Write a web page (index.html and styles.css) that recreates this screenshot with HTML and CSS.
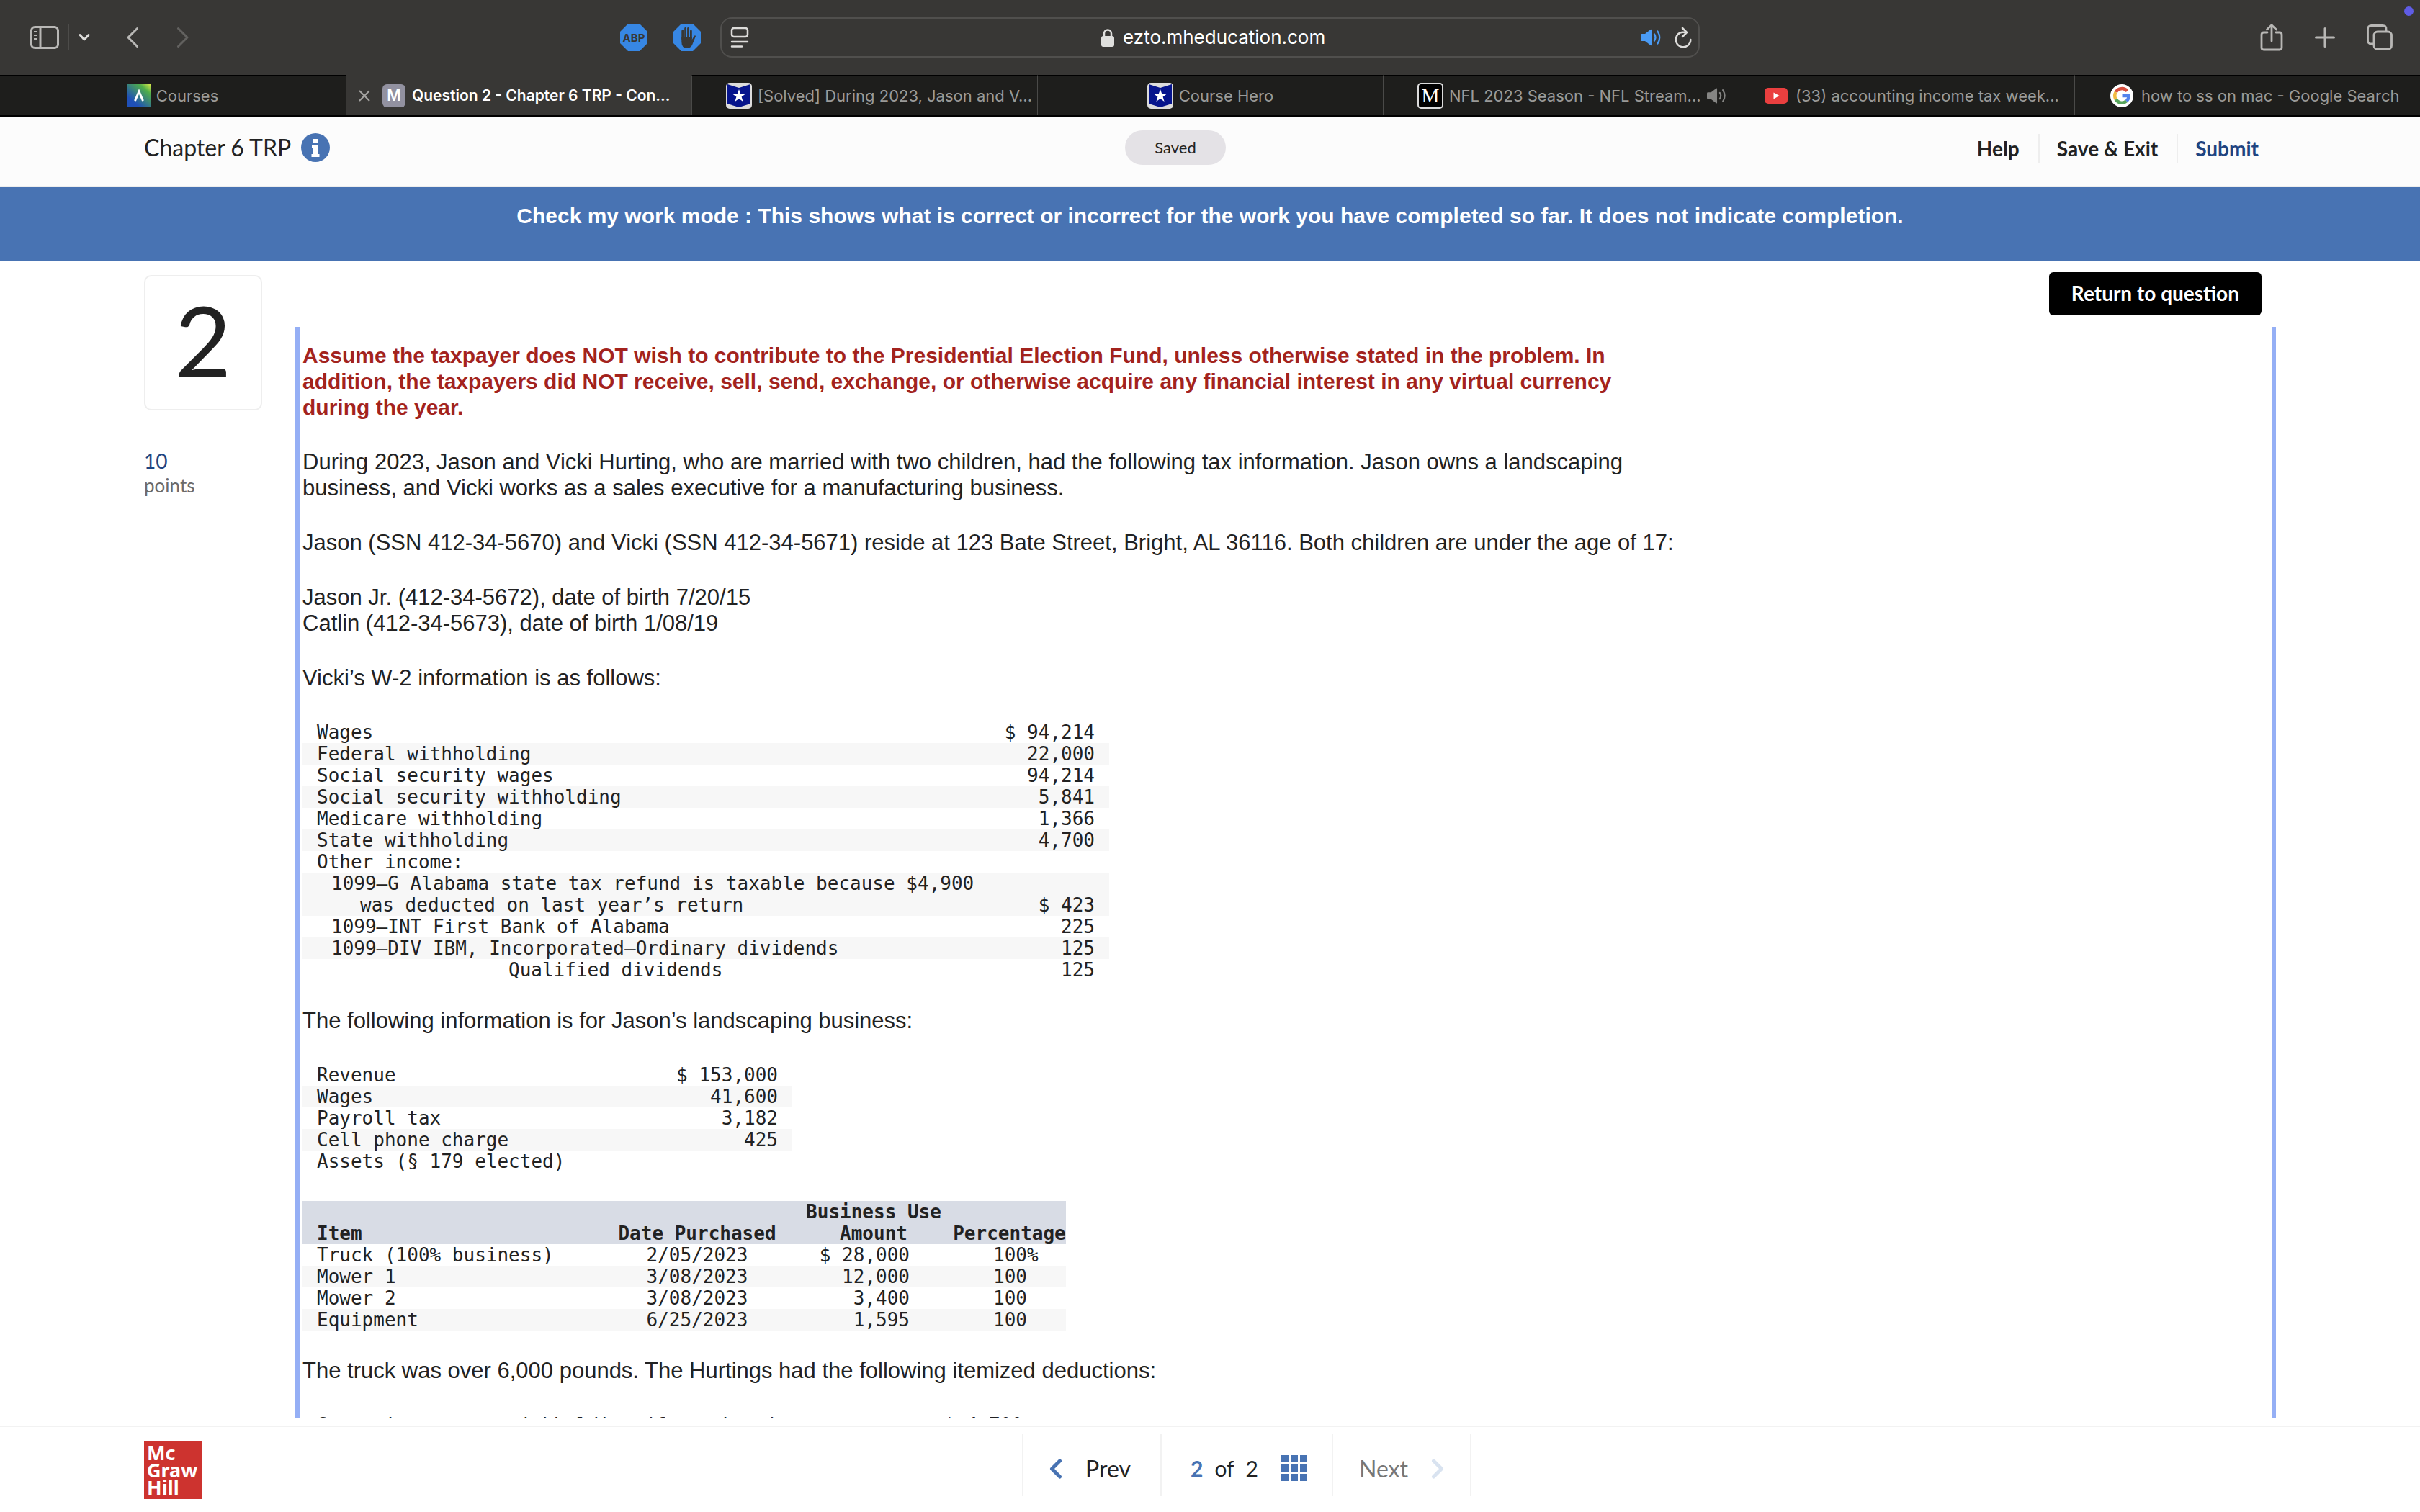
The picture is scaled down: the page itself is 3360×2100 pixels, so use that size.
FILE: index.html
```html
<!DOCTYPE html>
<html lang="en">
<head>
<meta charset="utf-8">
<title>Question 2 - Chapter 6 TRP - Connect</title>
<link rel="stylesheet" href="styles.css">
</head>
<body>
<div class="toolbar">
  <div class="tools-left">
    <button class="tool" aria-label="Sidebar"><svg width="40" height="32" viewBox="0 0 40 32" fill="none" stroke="#b8b7b5" stroke-width="3"><rect x="1.500" y="1.500" width="37" height="29" rx="5"/><path d="M14 2v28"/><path d="M5 8h5M5 13h5M5 18h5" stroke-width="2"/></svg></button>
    <span class="tool-line"></span>
    <button class="tool" aria-label="Tab groups"><svg width="16" height="12" viewBox="0 0 16 12" fill="none" stroke="#dddcda" stroke-width="3" stroke-linecap="round" stroke-linejoin="round"><path d="M2 2.500l6 6.500 6-6.500"/></svg></button>
    <button class="tool back" aria-label="Back"><svg width="18" height="30" viewBox="0 0 18 30" fill="none" stroke="#b8b7b5" stroke-width="3" stroke-linecap="round" stroke-linejoin="round"><path d="M15.500 2.500L3 15l12.500 12.500"/></svg></button>
    <button class="tool forward" aria-label="Forward"><svg width="18" height="30" viewBox="0 0 18 30" fill="none" stroke="#62615f" stroke-width="3" stroke-linecap="round" stroke-linejoin="round"><path d="M2.500 2.500L15 15 2.500 27.500"/></svg></button>
    <div class="extensions">
      <button class="tool" aria-label="Adblock Plus"><svg width="40" height="40" viewBox="0 0 40 40"><path d="M12 1h16l11 11v16L28 39H12L1 28V12z" fill="#3787e4"/><text x="20" y="26" text-anchor="middle" class="abp">ABP</text></svg></button>
      <button class="tool" aria-label="AdBlock"><svg width="40" height="40" viewBox="0 0 40 40"><path d="M12 1h16l11 11v16L28 39H12L1 28V12z" fill="#3787e4"/><g stroke="#383735" stroke-width="2.800" stroke-linecap="round" fill="none"><path d="M13.700 22V11M17.600 20V7.500M21.500 20V7.500M25.400 21V11"/></g><path d="M12.300 19h14.500v4l3.200-5.300q1.500-1.200 2 .6L28 28q-2 7-8 7-7.700 0-7.700-9z" fill="#383735"/></svg></button>
    </div>
  </div>
  <div class="address">
    <button class="tool" aria-label="Reader"><svg width="26" height="30" viewBox="0 0 26 30" fill="none" stroke="#dddcda" stroke-width="2.500" stroke-linecap="round"><rect x="2" y="2" width="22" height="12" rx="3"/><path d="M2 21h22M2 27.500h14"/></svg></button>
    <div class="host">
      <svg width="18" height="26" viewBox="0 0 18 26"><rect y="11" width="18" height="15" rx="3" fill="#dfdfdd"/><path d="M4 12V7.500a5 5 0 0 1 10 0V12" fill="none" stroke="#dfdfdd" stroke-width="2.500"/></svg>
      <input class="url" type="text" aria-label="Address" value="ezto.mheducation.com">
    </div>
    <div class="address-end">
      <button class="tool" aria-label="Mute"><svg width="32" height="24" viewBox="0 0 32 24"><path d="M0 8.500Q0 7 1.500 7H6l7-5.500Q15 0 15 2v20q0 2-2 .5L6 17H1.500Q0 17 0 15.500z" fill="#4a9bf5"/><path d="M19 7.500q3 4.500 0 9M23.500 3.500q5.500 8.500 0 17" fill="none" stroke="#4a9bf5" stroke-width="2.300" stroke-linecap="round"/></svg></button>
      <button class="tool" aria-label="Reload"><svg width="26" height="30" viewBox="0 0 26 30" fill="none" stroke="#dddcda" stroke-width="2.500" stroke-linecap="round" stroke-linejoin="round"><path d="M17 8.500A10.300 10.300 0 1 0 23.300 18M12 2l6 6-6 6"/></svg></button>
    </div>
  </div>
  <div class="tools-right">
    <button class="tool" aria-label="Share"><svg width="32" height="38" viewBox="0 0 32 38" fill="none" stroke="#b8b7b5" stroke-width="2.800" stroke-linecap="round" stroke-linejoin="round"><path d="M10 12H5q-3 0-3 3v18q0 3 3 3h22q3 0 3-3V15q0-3-3-3h-5M16 24V2M9.500 8L16 1.700 22.500 8"/></svg></button>
    <button class="tool" aria-label="New tab"><svg width="28" height="28" viewBox="0 0 28 28" stroke="#b8b7b5" stroke-width="3" stroke-linecap="round"><path d="M14 1.500v25M1.500 14h25"/></svg></button>
    <button class="tool" aria-label="Tab overview"><svg width="36" height="36" viewBox="0 0 36 36" fill="none" stroke="#b8b7b5" stroke-width="2.800"><rect x="10" y="10" width="24.500" height="24.500" rx="5"/><path d="M9 27H6.500q-5 0-5-5V6.500q0-5 5-5H22q5 0 5 5V9"/></svg></button>
  </div>
  <span class="status-dot"></span>
</div>
<nav class="tabs">
  <a class="tab centred" href="#"><svg width="32" height="32" viewBox="0 0 32 32"><defs><linearGradient id="cg" x1="1" y1="0" x2="0.300" y2="0.800"><stop offset="0" stop-color="#d8e84a"/><stop offset="0.300" stop-color="#4fae4a"/><stop offset="1" stop-color="#1f50b8"/></linearGradient></defs><path d="M0 0h32v32H0z" fill="url(#cg)"/><path d="M10.500 23L16 10l5.500 13" fill="none" stroke="#fff" stroke-width="3"/></svg><span>Courses</span></a>
  <a class="tab active" href="#"><svg class="close" width="16" height="16" viewBox="0 0 16 16" stroke="#a5a4a2" stroke-width="2"><path d="M1 1l14 14M15 1L1 15"/></svg><span class="m-icon">M</span><span>Question 2 - Chapter 6 TRP - Con...</span></a>
  <a class="tab" href="#"><svg width="36" height="36" viewBox="0 0 36 36"><rect width="36" height="36" rx="5" fill="#dcdcdc"/><path d="M2 2l16 5 16-5v27l-16 5-16-5z" fill="#06148c"/><path d="M18 9l2.300 6.500H27l-5.400 4 2 6.500-5.600-4-5.600 4 2-6.500-5.400-4h6.700z" fill="#fff"/></svg><span>[Solved] During 2023, Jason and V...</span></a>
  <a class="tab centred" href="#"><svg width="36" height="36" viewBox="0 0 36 36"><rect width="36" height="36" rx="5" fill="#dcdcdc"/><path d="M2 2l16 5 16-5v27l-16 5-16-5z" fill="#06148c"/><path d="M18 9l2.300 6.500H27l-5.400 4 2 6.500-5.600-4-5.600 4 2-6.500-5.400-4h6.700z" fill="#fff"/></svg><span>Course Hero</span></a>
  <a class="tab" href="#"><span class="nfl-icon">M</span><span>NFL 2023 Season - NFL Stream...</span><svg width="30" height="24" viewBox="0 0 32 24"><path d="M0 8.500Q0 7 1.500 7H6l7-5.500Q15 0 15 2v20q0 2-2 .5L6 17H1.500Q0 17 0 15.500z" fill="#858583"/><path d="M19 7.500q3 4.500 0 9M23.500 3.500q5.500 8.500 0 17" fill="none" stroke="#858583" stroke-width="2.300" stroke-linecap="round"/></svg></a>
  <a class="tab small-icon" href="#"><svg width="32" height="22" viewBox="0 0 32 22"><rect width="32" height="22" rx="5" fill="#ea3f3f"/><path d="M12.500 6.500v9l8-4.500z" fill="#fff"/></svg><span>(33) accounting income tax week...</span></a>
  <a class="tab small-icon" href="#"><svg width="32" height="32" viewBox="0 0 32 32"><circle cx="16" cy="16" r="16" fill="#fff"/><g fill="none" stroke-width="4.500"><path d="M23.500 9.500A9.700 9.700 0 0 0 7.700 11" stroke="#d8503f"/><path d="M7.700 11a9.700 9.700 0 0 0 0 10" stroke="#f2bb42"/><path d="M7.700 21a9.700 9.700 0 0 0 14.800 2.300" stroke="#58a55c"/><path d="M22.500 23.300A9.700 9.700 0 0 0 25.700 16H16.500" stroke="#5383ec"/></g></svg><span>how to ss on mac - Google Search</span></a>
</nav>
<header class="header">
  <div class="assignment"><span>Chapter 6 TRP</span><button class="tool" aria-label="Assignment info"><svg width="40" height="40" viewBox="0 0 40 40"><circle cx="20" cy="20" r="20" fill="#4873b3"/><path d="M17 8h6v5h-6zM15 17h8v12h2.500v4h-11v-4H17v-8h-2z" fill="#fff"/></svg></button></div>
  <div class="saved">Saved</div>
  <div class="actions"><a href="#">Help</a><a href="#">Save &amp; Exit</a><a class="submit" href="#">Submit</a></div>
</header>
<div class="banner">Check my work mode : This shows what is correct or incorrect for the work you have completed so far. It does not indicate completion.</div>
<main class="main">
  <aside class="side">
    <div class="number">2</div>
    <div class="score">10</div>
    <div class="score-label">points</div>
  </aside>
  <section class="work">
    <div class="work-top"><button class="return">Return to question</button></div>
    <div class="question">
      <p class="notice">Assume the taxpayer does NOT wish to contribute to the Presidential Election Fund, unless otherwise stated in the problem. In addition, the taxpayers did NOT receive, sell, send, exchange, or otherwise acquire any financial interest in any virtual currency during the year.</p>
      <p>During 2023, Jason and Vicki Hurting, who are married with two children, had the following tax information. Jason owns a landscaping business, and Vicki works as a sales executive for a manufacturing business.</p>
      <p>Jason (SSN 412-34-5670) and Vicki (SSN 412-34-5671) reside at 123 Bate Street, Bright, AL 36116. Both children are under the age of 17:</p>
      <p>Jason Jr. (412-34-5672), date of birth 7/20/15<br>Catlin (412-34-5673), date of birth 1/08/19</p>
      <p>Vicki’s W-2 information is as follows:</p>
      <table class="data w2">
        <tbody>
          <tr><td>Wages</td><td>$ 94,214</td></tr>
          <tr><td>Federal withholding</td><td>22,000</td></tr>
          <tr><td>Social security wages</td><td>94,214</td></tr>
          <tr><td>Social security withholding</td><td>5,841</td></tr>
          <tr><td>Medicare withholding</td><td>1,366</td></tr>
          <tr><td>State withholding</td><td>4,700</td></tr>
          <tr><td>Other income:</td><td></td></tr>
          <tr><td class="sub hanging">1099–G Alabama state tax refund is taxable because $4,900<br>was deducted on last year’s return</td><td>$ 423</td></tr>
          <tr><td class="sub">1099–INT First Bank of Alabama</td><td>225</td></tr>
          <tr><td class="sub">1099–DIV IBM, Incorporated–Ordinary dividends</td><td>125</td></tr>
          <tr><td class="deep">Qualified dividends</td><td>125</td></tr>
        </tbody>
      </table>
      <p>The following information is for Jason’s landscaping business:</p>
      <table class="data business">
        <tbody>
          <tr><td>Revenue</td><td>$ 153,000</td></tr>
          <tr><td>Wages</td><td>41,600</td></tr>
          <tr><td>Payroll tax</td><td>3,182</td></tr>
          <tr><td>Cell phone charge</td><td>425</td></tr>
          <tr><td>Assets (§ 179 elected)</td><td></td></tr>
        </tbody>
      </table>
      <table class="data assets">
        <colgroup><col class="c-item"><col class="c-date"><col class="c-amount"><col class="c-percent"></colgroup>
        <thead><tr><th>Item</th><th>Date Purchased</th><th>Business Use<br>Amount</th><th>Percentage</th></tr></thead>
        <tbody>
          <tr><td>Truck (100% business)</td><td>2/05/2023</td><td>$ 28,000</td><td>100%</td></tr>
          <tr><td>Mower 1</td><td>3/08/2023</td><td>12,000</td><td>100</td></tr>
          <tr><td>Mower 2</td><td>3/08/2023</td><td>3,400</td><td>100</td></tr>
          <tr><td>Equipment</td><td>6/25/2023</td><td>1,595</td><td>100</td></tr>
        </tbody>
      </table>
      <p>The truck was over 6,000 pounds. The Hurtings had the following itemized deductions:</p>
      <table class="data deductions"><tbody><tr><td>State income tax withholding (from above)</td><td>$ 4,700</td></tr></tbody></table>
    </div>
  </section>
</main>
<footer class="footer">
  <div class="logo">Mc<br>Graw<br>Hill</div>
  <div class="pager">
    <button class="page-btn prev"><svg width="18" height="28" viewBox="0 0 18 28" fill="none" stroke="#4873b3" stroke-width="5" stroke-linecap="round" stroke-linejoin="round"><path d="M14.500 3L3.500 14l11 11"/></svg>Prev</button>
    <div class="count"><b>2</b><span>of</span><span>2</span><button class="tool grid-btn" aria-label="Question list"><svg width="36" height="36" viewBox="0 0 36 36" fill="#4873b3"><path d="M0 0h10v10H0zM13 0h10v10H13zM26 0h10v10H26zM0 13h10v10H0zM13 13h10v10H13zM26 13h10v10H26zM0 26h10v10H0zM13 26h10v10H13zM26 26h10v10H26z"/></svg></button></div>
    <button class="page-btn next" disabled>Next<svg width="18" height="28" viewBox="0 0 18 28" fill="none" stroke="#d9e3f0" stroke-width="5" stroke-linecap="round" stroke-linejoin="round"><path d="M3.500 3l11 11-11 11"/></svg></button>
  </div>
</footer>
</body>
</html>
```
FILE: styles.css
```css
* { box-sizing: border-box; }

body {
  margin: 0;
  height: 100vh;
  display: flex;
  flex-direction: column;
  background: #fff;
  color: #222;
  font-family: Lato, "Open Sans", sans-serif;
  font-size: 30px;
  line-height: 36px;
}

button, input { font: inherit; color: inherit; border: 0; padding: 0; background: none; }
a { color: inherit; text-decoration: none; }
svg { display: block; flex: none; }
.tool { display: flex; }

/* Browser toolbar */
.toolbar {
  position: relative;
  flex: none;
  display: grid;
  grid-template-columns: 1000fr 1360fr 1000fr;
  align-items: center;
  height: 104px;
  background: #383735;
  font-family: Inter, sans-serif;
}
.tools-left { display: flex; align-items: center; height: 40px; padding: 0 26px 0 42px; }
.tool-line { width: 1px; height: 36px; margin: 0 13px; background: #4d4c4a; }
.back { margin-left: 50px; }
.forward { margin-left: 52px; }
.extensions { display: flex; gap: 34px; margin-left: auto; }
.abp { font: 700 15px Inter, sans-serif; fill: #383735; }
.address {
  display: grid;
  grid-template-columns: 1fr auto 1fr;
  align-items: center;
  height: 56px;
  padding: 0 8px 0 12px;
  border: 2px solid #504f4d;
  border-radius: 16px;
}
.host { display: flex; align-items: center; gap: 12px; padding-left: 8px; }
.url { width: 284px; color: #fff; font-size: 26px; line-height: 32px; }
.address-end { display: flex; align-items: center; justify-content: flex-end; gap: 14px; }
.tools-right { display: flex; align-items: center; justify-content: flex-end; gap: 44px; padding-right: 38px; }
.status-dot { position: absolute; top: 9px; right: 9px; width: 13px; height: 13px; border-radius: 50%; background: #5f5ce5; }

/* Tab strip */
.tabs {
  flex: none;
  display: grid;
  grid-template-columns: repeat(7, 1fr);
  height: 58px;
  border-bottom: 2px solid #000;
  background: #1e1e1c;
  color: #9a9a98;
  font: 22px/28px Inter, sans-serif;
}
.tab {
  display: flex;
  align-items: center;
  gap: 8px;
  padding-left: 47px;
  border-top: 1px solid #000;
  border-left: 1px solid #4a4a48;
  white-space: nowrap;
}
.tab:first-child { border-left: 0; }
.centred { justify-content: center; padding-left: 0; }
.small-icon { gap: 11px; padding-left: 49px; }
.active { gap: 9px; padding-left: 17px; border-top-color: #383735; background: #383735; color: #fff; font-size: 21px; font-weight: 600; }
.close { margin-right: 8px; }
.m-icon { width: 32px; border-radius: 6px; background: #9291a0; line-height: 32px; text-align: center; }
.nfl-icon {
  width: 36px;
  border: 2px solid #dcdcdc;
  border-radius: 5px;
  background: #000;
  color: #fff;
  font: 28px/32px "Liberation Serif", serif;
  text-align: center;
}

/* Assignment header */
.header {
  flex: none;
  display: grid;
  grid-template-columns: 1362fr 140px 1434fr;
  align-items: center;
  height: 98px;
  padding: 0 224px 10px 200px;
  border-bottom: 2px solid #eee;
  background: #fcfcfc;
}
.assignment { display: flex; align-items: center; gap: 14px; font-size: 32px; }
.saved { border-radius: 24px; background: #e4e2e6; font-size: 22px; line-height: 48px; text-align: center; }
.actions { display: flex; justify-content: flex-end; padding-top: 2px; font-size: 28px; line-height: 40px; font-weight: 700; }
.actions a { padding-left: 24px; }
.actions a + a { margin-left: 26px; border-left: 2px solid #eee; }
.submit { color: #1f4480; }

.banner {
  flex: none;
  height: 102px;
  padding-top: 22px;
  background: #4873b3;
  color: #fff;
  font-family: "Liberation Sans", sans-serif;
  font-weight: 700;
  text-align: center;
}

/* Question */
.main { flex: 1; min-height: 0; display: flex; gap: 46px; padding: 16px 200px 10px; }
.side { flex: none; width: 164px; padding-top: 4px; }
.number {
  height: 188px;
  margin-bottom: 52px;
  border: 2px solid #eee;
  border-radius: 10px;
  font-size: 136px;
  line-height: 176px;
  text-align: center;
}
.score { color: #1f4480; font-size: 28px; }
.score-label { color: #6b6b6b; font-size: 26px; line-height: 32px; }
.work { flex: 1; min-width: 0; display: flex; flex-direction: column; gap: 16px; }
.work-top { display: flex; justify-content: flex-end; padding-right: 20px; }
.return { height: 60px; padding: 0 31px 2px; border-radius: 6px; background: #000; color: #fff; font-size: 28px; font-weight: 700; }
.question {
  flex: 1;
  min-height: 0;
  display: flex;
  flex-direction: column;
  align-items: flex-start;
  gap: 40px;
  padding: 22px 4px 0;
  border: solid #95aff5;
  border-width: 0 6px;
  overflow: hidden;
  font-family: "Liberation Sans", sans-serif;
  font-size: 31px;
}
.question > * { flex: none; }
p { margin: 0; max-width: 1910px; }
.notice { max-width: 1880px; color: #a3231d; font-size: 30px; font-weight: 700; }

.data {
  margin: 2px 0 -2px;
  border-collapse: collapse;
  table-layout: fixed;
  font: 26px/30px "DejaVu Sans Mono", monospace;
}
.data td, .data th { padding: 0; vertical-align: bottom; white-space: nowrap; }
.data td:first-child, .data th:first-child { padding-left: 20px; text-align: left; }
.data td:last-child { padding-right: 20px; text-align: right; }
.data tbody tr:nth-child(even) { background: #f7f7f7; }
.w2 { width: 1120px; }
.business { width: 680px; }
.deductions { width: 1020px; }
.w2 td:first-child { width: 940px; }
.deductions td:first-child { width: 720px; }
.data td.sub { padding-left: 40px; }
.data td.hanging { padding-left: 80px; text-indent: -40px; }
.data td.deep { padding-left: 286px; }
.assets { width: 1060px; }
.assets thead { background: #d8dce5; }
.c-item { width: 438px; }
.c-date { width: 245px; }
.c-amount { width: 220px; }
.c-percent { width: 157px; }
.assets :is(td, th):nth-child(2) { padding-right: 25px; text-align: center; }
.assets td:nth-child(3) { padding-right: 60px; text-align: right; }
.assets td:nth-child(4) { padding: 0 0 0 56px; text-align: left; }

/* Footer */
.footer {
  flex: none;
  display: grid;
  grid-template-columns: 1219fr 624px 1117fr;
  align-items: start;
  height: 120px;
  padding: 10px 200px;
  border-top: 2px solid #f2f2f2;
}
.logo {
  width: 80px;
  height: 80px;
  margin-top: 10px;
  padding: 4px 0 0 4px;
  background: #cd332f;
  color: #fff;
  font: 700 27px/24px "Noto Sans", sans-serif;
}
.pager { display: flex; height: 86px; border: solid #f2f2f2; border-width: 0 2px; font-size: 32px; }
.page-btn { flex: none; width: 190px; display: flex; align-items: center; padding: 10px 0 0 36px; gap: 32px; }
.count { flex: 1; display: flex; align-items: center; gap: 16px; padding: 8px 0 0 40px; border: solid #f2f2f2; border-width: 0 2px; font-size: 30px; }
.count b { color: #4873b3; }
.grid-btn { margin-left: 16px; }
.next { color: #777; }
```
